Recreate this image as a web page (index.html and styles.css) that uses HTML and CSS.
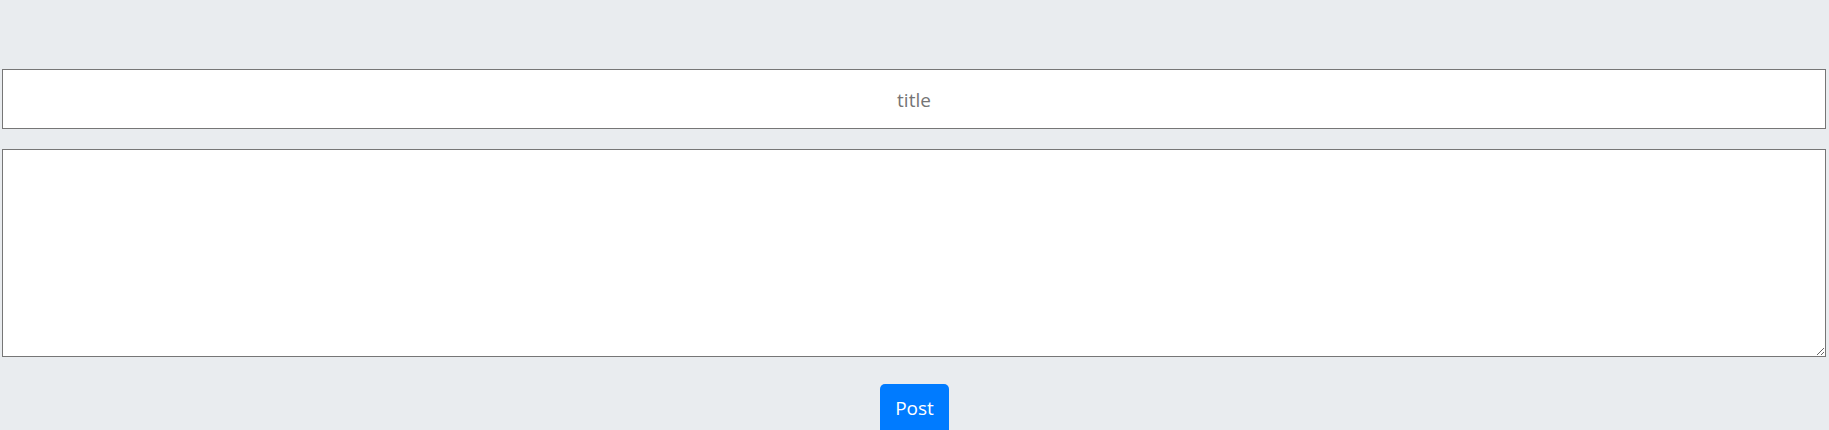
FILE: index.html
```html
<!DOCTYPE html>
<html>
<head>
<meta charset="utf-8">
<link rel="stylesheet" href="styles.css">
</head>
<body>
<form class="post-form">
  <input class="title-input" type="text" placeholder="title">
  <textarea class="body-input"></textarea>
  <div class="actions">
    <button class="btn-post" type="button">Post</button>
  </div>
</form>
</body>
</html>
```
FILE: styles.css
```css
html, body {
  margin: 0;
  padding: 0;
  background: #e9ecef;
  height: 100%;
  overflow: hidden;
}
.post-form {
  display: flex;
  flex-direction: column;
  padding: 69px 3px 0 2px;
  font-family: "Open Sans", "Noto Sans", sans-serif;
}
.title-input {
  box-sizing: border-box;
  width: 100%;
  height: 60px;
  margin: 0;
  border: 1px solid #767676;
  background: #fff;
  text-align: center;
  font-family: "Open Sans", "Noto Sans", sans-serif;
  font-size: 19px;
  color: #333;
  outline: none;
  padding-top: 2px;
}
.title-input::placeholder {
  color: #757575;
}
.body-input {
  box-sizing: border-box;
  width: 100%;
  height: 208px;
  margin: 20px 0 0 0;
  border: 1px solid #767676;
  background: #fff;
  font-family: "Open Sans", "Noto Sans", sans-serif;
  font-size: 19px;
  outline: none;
  resize: both;
}
.actions {
  display: flex;
  justify-content: center;
  margin-top: 27px;
  padding-left: 1px;
}
.btn-post {
  box-sizing: border-box;
  height: 50px;
  padding: 9px 15px 0 15px;
  border: none;
  border-radius: 5px;
  background: #007bff;
  color: #fff;
  font-family: "Open Sans", "Noto Sans", sans-serif;
  font-size: 19px;
  line-height: 30px;
  display: flex;
  align-items: flex-start;
}
```
